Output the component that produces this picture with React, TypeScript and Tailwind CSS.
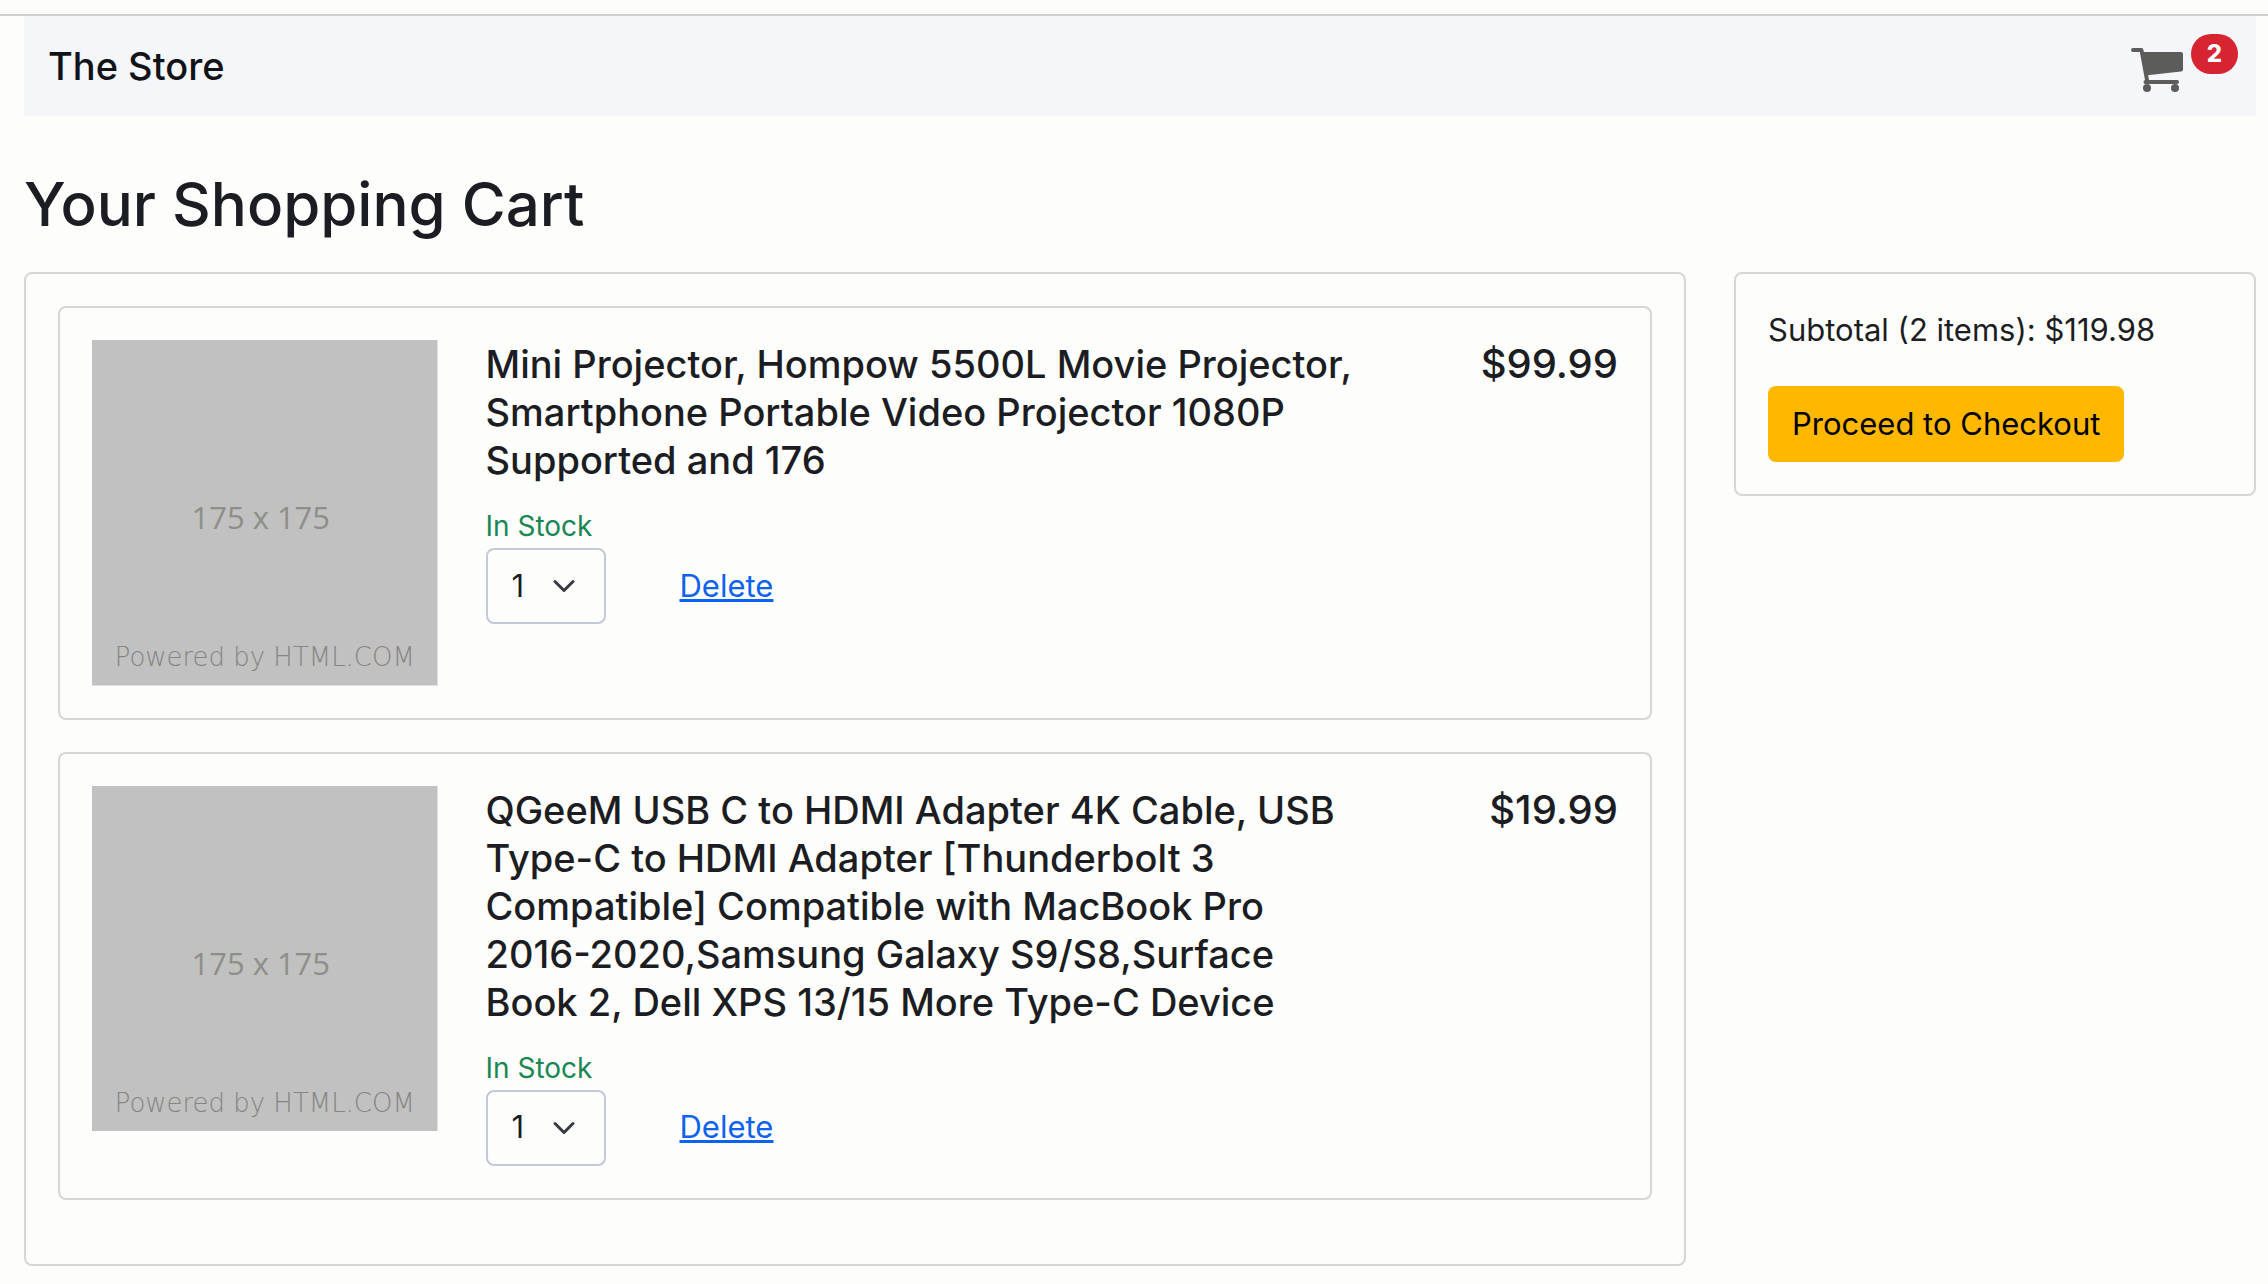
import { useState } from "react";

interface CartItem {
  id: string;
  title: string;
  price: number;
  quantity: number;
}

const initialItems: CartItem[] = [
  {
    id: "projector",
    title:
      "Mini Projector, Hompow 5500L Movie Projector, Smartphone Portable Video Projector 1080P Supported and 176",
    price: 99.99,
    quantity: 1,
  },
  {
    id: "adapter",
    title:
      "QGeeM USB C to HDMI Adapter 4K Cable, USB Type-C to HDMI Adapter [Thunderbolt 3 Compatible] Compatible with MacBook Pro 2016-2020,Samsung Galaxy S9/S8,Surface Book 2, Dell XPS 13/15 More Type-C Device",
    price: 19.99,
    quantity: 1,
  },
];

const CartIcon = () => (
  <svg viewBox="0 0 52 44" className="h-11 w-13 text-[#5c5c5a]" fill="none" stroke="currentColor" aria-hidden="true">
    <path d="M2 2h8.5l5.5 30" strokeWidth="4" strokeLinecap="round" strokeLinejoin="round" />
    <path d="M10 4h40a2 2 0 0 1 2 2v15.500a2 2 0 0 1-2 2L14 27.500z" fill="currentColor" stroke="none" />
    <path d="M14.500 34h31.500" strokeWidth="4" strokeLinecap="round" />
    <circle cx="16" cy="40" r="4" fill="currentColor" stroke="none" />
    <circle cx="44" cy="40" r="4" fill="currentColor" stroke="none" />
  </svg>
);

const Header = ({ count }: { count: number }) => (
  <header className="flex items-start justify-between bg-[#f4f6fa] h-25 pl-6 pr-4.5">
    <a href="#" className="text-[38px] leading-[60px] font-medium text-[#121318] pt-5">
      The Store
    </a>
    <a href="#cart" aria-label="Shopping cart" className="flex items-start gap-2 pt-4.5">
      <span className="pt-3.5">
        <CartIcon />
      </span>
      <span className="h-10 rounded-full bg-[#d62430] px-4 text-2xl leading-10 font-extrabold text-white">
        {count}
      </span>
    </a>
  </header>
);

const Placeholder = () => (
  <svg viewBox="0 0 346 346" className="w-full" role="img" aria-label="175 x 175">
    <rect width="346" height="346" fill="#c1c1c1" />
    <text x="169" y="189" textAnchor="middle" fontSize="31" fill="#8e8e8a" fontFamily="'Open Sans', sans-serif">
      175 x 175
    </text>
    <text x="173" y="326" textAnchor="middle" fontSize="26" fill="#858582" fontFamily="'DejaVu Sans', sans-serif" fontWeight="200">
      Powered by HTML.COM
    </text>
  </svg>
);

interface CartRowProps {
  item: CartItem;
  onQuantity: (quantity: number) => void;
  onDelete: () => void;
}

const CartRow = ({ item, onQuantity, onDelete }: CartRowProps) => (
  <li className="mb-8 grid grid-cols-12 gap-12 rounded-lg border-2 border-[#d6d6d6] p-8">
    <div className="col-span-3">
      <Placeholder />
    </div>
    <div className="col-span-7">
      <h2 className="mb-4 text-[38px] leading-12 font-medium">{item.title}</h2>
      <p className="pt-1 text-[28px] leading-11 text-[#198754]">In Stock</p>
      <div className="flex items-center gap-[74px]">
        <div className="relative">
          <select
            aria-label="Quantity"
            value={item.quantity}
            onChange={(e) => onQuantity(Number(e.target.value))}
            className="block h-19 w-30 appearance-none rounded-lg border-2 border-[#c3c9d5] bg-transparent pl-6 text-[31px]"
          >
            {[1, 2, 3, 4, 5].map((n) => (
              <option key={n}>{n}</option>
            ))}
          </select>
          <svg
            viewBox="0 0 16 16"
            className="pointer-events-none absolute top-[26px] right-[30px] size-6"
            fill="none"
            stroke="#343a40"
            strokeWidth="2"
            strokeLinecap="round"
            strokeLinejoin="round"
            aria-hidden="true"
          >
            <path d="m2 5 6 6 6-6" />
          </svg>
        </div>
        <button type="button" onClick={onDelete} className="text-[31px] text-[#0d62f0] underline">
          Delete
        </button>
      </div>
    </div>
    <p className="col-span-2 text-right text-[40px] leading-12 font-medium">${item.price.toFixed(2)}</p>
  </li>
);

export default function App() {
  const [items, setItems] = useState(initialItems);

  const count = items.reduce((sum, item) => sum + item.quantity, 0);
  const subtotal = items.reduce((sum, item) => sum + item.price * item.quantity, 0);

  const setQuantity = (id: string, quantity: number) =>
    setItems(items.map((item) => (item.id === id ? { ...item, quantity } : item)));

  return (
    <div className="min-h-screen bg-[#fdfdfc] pt-3.5 pb-4 font-['Inter',sans-serif] text-[#1c1d22]">
      <div className="border-t-2 border-[#cfcfcf]" />
      <div className="px-6 pr-3">
        <Header count={count} />
        <h1 className="pt-12 pb-7 text-6xl leading-20 font-medium">Your Shopping Cart</h1>
        <main className="grid grid-cols-12 items-start gap-12">
          <ul className="col-span-9 rounded-lg border-2 border-[#d6d6d6] p-8">
            {items.map((item) => (
              <CartRow
                key={item.id}
                item={item}
                onQuantity={(quantity) => setQuantity(item.id, quantity)}
                onDelete={() => setItems(items.filter((other) => other.id !== item.id))}
              />
            ))}
          </ul>
          <aside className="col-span-3 rounded-lg border-2 border-[#d6d6d6] p-8">
            <p className="mb-8 text-[31px] leading-12">
              Subtotal ({count} items): ${subtotal.toFixed(2)}
            </p>
            <button type="button" className="h-19 rounded-lg bg-[#ffb700] px-6 text-[31px] text-black">
              Proceed to Checkout
            </button>
          </aside>
        </main>
      </div>
    </div>
  );
}
